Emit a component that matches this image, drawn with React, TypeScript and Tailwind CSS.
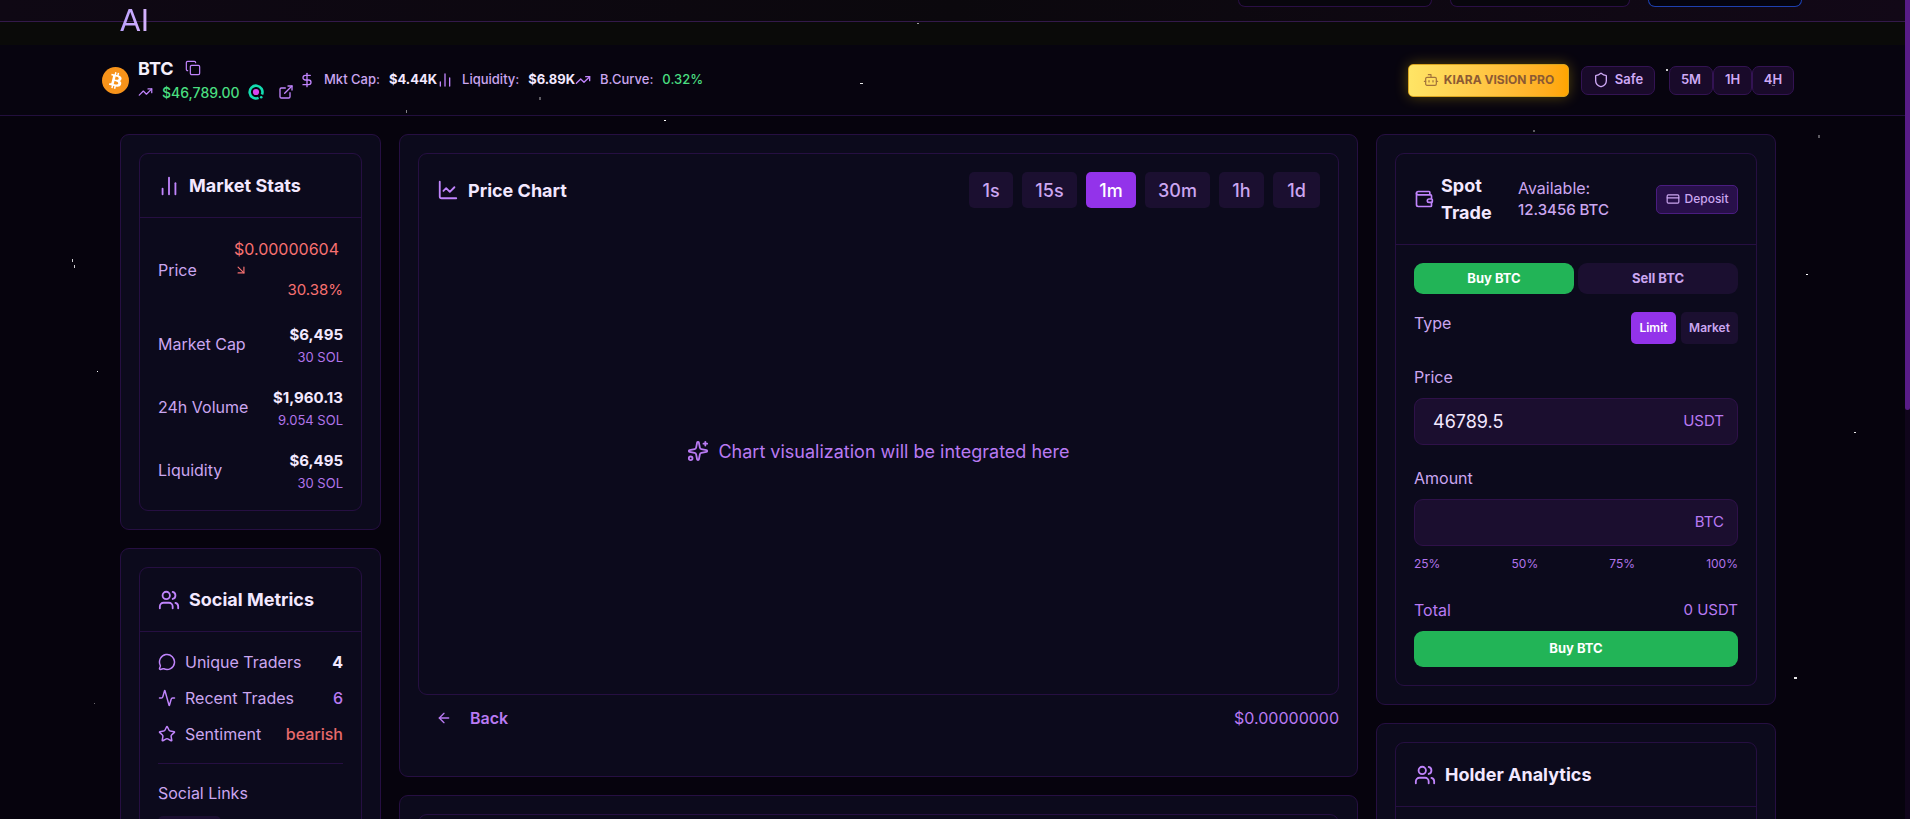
import type { ReactNode } from "react";
import {
  Activity,
  ArrowDownRight,
  ArrowLeft,
  Bot,
  ChartLine,
  ChartNoAxesColumn,
  Copy,
  CreditCard,
  DollarSign,
  ExternalLink,
  MessageCircle,
  Shield,
  Sparkles,
  Star,
  TrendingUp,
  Users,
  Wallet,
} from "lucide-react";

const stars = [
  { x: 917, y: 23, w: 2, h: 1, o: 0.6 },
  { x: 406, y: 110, w: 1, h: 3, o: 0.5 },
  { x: 539, y: 97, w: 2, h: 3, o: 0.35 },
  { x: 664, y: 120, w: 2, h: 1, o: 1 },
  { x: 860, y: 83, w: 3, h: 1, o: 0.9 },
  { x: 1666, y: 69, w: 2, h: 2, o: 0.8 },
  { x: 1772, y: 85, w: 3, h: 1, o: 0.4 },
  { x: 1533, y: 130, w: 2, h: 2, o: 0.35 },
  { x: 1818, y: 135, w: 2, h: 3, o: 0.35 },
  { x: 1806, y: 274, w: 2, h: 1, o: 1 },
  { x: 1854, y: 432, w: 2, h: 1, o: 0.9 },
  { x: 1794, y: 677, w: 3, h: 2, o: 0.9 },
  { x: 72, y: 259, w: 1, h: 3, o: 0.8 },
  { x: 74, y: 265, w: 1, h: 3, o: 0.8 },
  { x: 97, y: 371, w: 1, h: 1, o: 1 },
  { x: 94, y: 703, w: 1, h: 1, o: 0.4 },
];

function Starfield() {
  return (
    <div className="pointer-events-none absolute inset-0 z-20" aria-hidden="true">
      {stars.map((s) => (
        <span
          key={`${s.x}-${s.y}`}
          className="absolute bg-white"
          style={{ left: s.x, top: s.y, width: s.w, height: s.h, opacity: s.o }}
        />
      ))}
    </div>
  );
}

function Card({ children, className = "" }: { children?: ReactNode; className?: string }) {
  return (
    <section className="rounded-[9px] border border-[#260f42] bg-[#0c0a1c] p-[18px]">
      <div className={`rounded-[9px] border border-[#260f42] ${className}`}>{children}</div>
    </section>
  );
}

function CardHeader({ icon, title }: { icon: ReactNode; title: string }) {
  return (
    <header className="flex items-center gap-[9px] border-b border-[#260f42] p-[18px]">
      {icon}
      <h2 className="text-[18px] leading-[27px] font-bold text-[#f3e8ff]">{title}</h2>
    </header>
  );
}

function TopNav() {
  return (
    <header className="relative z-10 flex h-[22px] shrink-0 justify-between border-b border-[#33194a] bg-gradient-to-r from-[#0f0814] via-[#0b080d] to-[#120817] pr-[103px] pl-[120px]">
      <a
        href="#home"
        className="h-[42px] bg-gradient-to-r from-[#b9a0fb] to-[#d8b4fe] bg-clip-text font-['DejaVu_Sans',sans-serif] text-[30px] leading-[42px] text-transparent"
      >
        AI
      </a>
      <nav className="flex gap-[18px]" aria-label="Account">
        <button aria-label="Network" className="h-[7px] w-[194px] rounded-b-[7px] border border-t-0 border-[#2a0f45] bg-[#08060d]" />
        <button aria-label="Language" className="h-[7px] w-[180px] rounded-b-[7px] border border-t-0 border-[#2a0f45] bg-[#08060d]" />
        <button aria-label="Connect" className="h-[7px] w-[154px] rounded-b-[7px] border border-t-0 border-[#1e40af] bg-[#04030f]" />
      </nav>
    </header>
  );
}

function BitcoinLogo() {
  return (
    <svg viewBox="0 0 32 32" className="size-[27px] shrink-0" aria-label="Bitcoin">
      <circle cx="16" cy="16" r="16" fill="#f7931a" />
      <path
        fill="#fff"
        fillRule="evenodd"
        d="M23.189 14.02c.314-2.096-1.283-3.223-3.465-3.975l.708-2.84-1.728-.43-.69 2.765c-.454-.114-.92-.22-1.385-.326l.695-2.783L15.596 6l-.708 2.839c-.376-.086-.746-.17-1.104-.26l.002-.009-2.384-.595-.46 1.846s1.283.294 1.256.312c.7.175.826.638.805 1.006l-.806 3.235c.048.012.11.03.18.057l-.183-.045-1.13 4.532c-.086.212-.303.531-.793.41.018.025-1.256-.313-1.256-.313l-.858 1.978 2.25.561c.418.105.828.215 1.231.318l-.715 2.872 1.727.43.708-2.84c.472.127.93.245 1.378.357l-.706 2.828 1.728.43.715-2.866c2.948.558 5.164.333 6.097-2.333.752-2.146-.037-3.385-1.588-4.192 1.13-.26 1.98-1.003 2.207-2.538zm-3.95 5.538c-.533 2.147-4.148.986-5.32.695l.95-3.805c1.172.293 4.929.872 4.37 3.11zm.535-5.569c-.487 1.953-3.495.96-4.47.717l.86-3.45c.975.243 4.118.696 3.61 2.733z"
      />
    </svg>
  );
}

function ExchangeMark() {
  return (
    <svg viewBox="0 0 16 16" className="size-4" aria-hidden="true">
      <path d="M10.6 13.9A6.4 6.4 0 1 1 14 10.4" fill="none" stroke="#14dcb0" strokeWidth="2.6" />
      <circle cx="8" cy="8" r="3.1" fill="#d946ef" />
      <circle cx="13.2" cy="13.2" r="1.3" fill="#14dcb0" />
    </svg>
  );
}

function TokenBar() {
  return (
    <div className="mt-[23px] flex h-[71px] shrink-0 items-center justify-between border-b border-[#220f3d] bg-[#07040f] pr-[111px] pl-[102px]">
      <div className="flex items-center">
        <BitcoinLogo />
        <div className="ml-[9px] flex w-[156px] flex-col">
          <div className="flex h-6 items-center gap-[11px]">
            <h1 className="text-[18px] font-bold text-[#f5f0fb]">BTC</h1>
            <button aria-label="Copy address" className="text-[#c084fc]">
              <Copy size={16} strokeWidth={1.8} />
            </button>
          </div>
          <div className="flex h-6 items-center text-[14px] font-medium">
            <TrendingUp size={16} className="text-[#c084fc]" />
            <span className="ml-[9px] w-[77px] text-[#4ade80]">$46,789.00</span>
            <a href="#exchange" aria-label="View exchange" className="ml-[9px]">
              <ExchangeMark />
            </a>
            <a href="#explorer" aria-label="Open explorer" className="ml-[14px] text-[#c084fc]">
              <ExternalLink size={16} />
            </a>
          </div>
        </div>
        <dl className="ml-[5px] flex text-[13px] font-medium text-[#cba6f0]">
          <div className="flex items-center">
            <DollarSign size={16} className="mr-[9px] text-[#c084fc]" />
            <dt>Mkt Cap:</dt>
            <dd className="ml-[9px] font-bold text-[#f3e8ff]">$4.44K</dd>
          </div>
          <div className="flex items-center">
            <ChartNoAxesColumn size={16} className="mr-[9px] text-[#c084fc]" />
            <dt>Liquidity:</dt>
            <dd className="ml-[9px] font-bold text-[#f3e8ff]">$6.89K</dd>
          </div>
          <div className="flex items-center">
            <TrendingUp size={16} className="mr-[9px] text-[#c084fc]" />
            <dt>B.Curve:</dt>
            <dd className="ml-[9px] text-[#4ade80]">0.32%</dd>
          </div>
        </dl>
      </div>
      <div className="flex items-center text-[13px] font-semibold text-[#cfa9f6]">
        <button className="flex h-[33px] w-[161px] items-center justify-center gap-[5px] rounded-[5px] border border-[#d9a520] bg-gradient-to-r from-[#ffe566] to-[#ffa500] font-semibold text-[#8c5a33] shadow-[0_0_14px_rgba(255,215,0,0.3)]">
          <Bot size={16} strokeWidth={1.8} className="opacity-80" />
          <span className="text-[12px] font-bold">KIARA VISION PRO</span>
        </button>
        <button className="ml-3 flex h-[29px] w-[74px] items-center justify-center gap-1.5 rounded-[7px] border border-[#331353] bg-[#190a2a]">
          <Shield size={16} />
          Safe
        </button>
        <div className="ml-[14px] flex">
          <button className="h-[29px] w-11 rounded-[7px] border border-[#331353] bg-[#190a2a]">5M</button>
          <button className="h-[29px] w-[39px] rounded-[7px] border border-[#331353] bg-[#190a2a]">1H</button>
          <button className="h-[29px] w-[42px] rounded-[7px] border border-[#331353] bg-[#190a2a]">4H</button>
        </div>
      </div>
    </div>
  );
}

const marketRows = [
  { label: "Market Cap", value: "$6,495", sub: "30 SOL" },
  { label: "24h Volume", value: "$1,960.13", sub: "9.054 SOL" },
  { label: "Liquidity", value: "$6,495", sub: "30 SOL" },
];

function MarketStats() {
  return (
    <Card>
      <CardHeader icon={<ChartNoAxesColumn size={22} className="text-[#c084fc]" />} title="Market Stats" />
      <dl className="flex flex-col gap-[18px] p-[18px] text-[16px]">
        <div className="flex items-center justify-between">
          <dt className="text-[#cba6f0]">Price</dt>
          <dd className="w-[109px] text-[#f87171]">
            <div className="leading-[27px]">$0.00000604</div>
            <ArrowDownRight size={14} />
            <div className="text-right text-[15px] leading-[26px]">30.38%</div>
          </dd>
        </div>
        {marketRows.map((row) => (
          <div key={row.label} className="flex items-center justify-between">
            <dt className="text-[#cba6f0]">{row.label}</dt>
            <dd className="text-right">
              <div className="text-[15px] leading-[27px] font-bold text-[#f3e8ff]">{row.value}</div>
              <div className="text-[13px] leading-[18px] text-[#b174ea]">{row.sub}</div>
            </dd>
          </div>
        ))}
      </dl>
    </Card>
  );
}

function SocialMetrics() {
  return (
    <Card>
      <CardHeader icon={<Users size={22} className="text-[#c084fc]" />} title="Social Metrics" />
      <div className="p-[18px] text-[16px]">
        <dl className="flex flex-col gap-3">
          <div className="flex h-6 items-center gap-[9px]">
            <MessageCircle size={18} className="text-[#c084fc]" />
            <dt className="text-[#cba6f0]">Unique Traders</dt>
            <dd className="ml-auto font-bold text-[#f3e8ff]">4</dd>
          </div>
          <div className="flex h-6 items-center gap-[9px]">
            <Activity size={18} className="text-[#c084fc]" />
            <dt className="text-[#cba6f0]">Recent Trades</dt>
            <dd className="ml-auto font-medium text-[#b97af3]">6</dd>
          </div>
          <div className="flex h-6 items-center gap-[9px]">
            <Star size={18} className="text-[#c084fc]" />
            <dt className="text-[#cba6f0]">Sentiment</dt>
            <dd className="ml-auto font-medium text-[#e86a6c]">bearish</dd>
          </div>
        </dl>
        <div className="mt-[17px] border-t border-[#260f42] pt-[18px]">
          <h3 className="leading-[22px] text-[#cba6f0]">Social Links</h3>
          <button aria-label="Website" className="mt-3 h-9 w-[63px] rounded-[5px] bg-[#1b0f30]" />
        </div>
      </div>
    </Card>
  );
}

const intervals = [
  { label: "1s", width: "w-[44px]" },
  { label: "15s", width: "w-[55px]" },
  { label: "1m", width: "w-[50px]" },
  { label: "30m", width: "w-[65px]" },
  { label: "1h", width: "w-[45px]" },
  { label: "1d", width: "w-[47px]" },
];

function ChartPanel() {
  return (
    <section className="rounded-[9px] border border-[#260f42] bg-[#0c0a1c] p-[18px]">
      <div className="flex h-[542px] flex-col rounded-[9px] border border-[#260f42]">
        <div className="flex items-center justify-between px-[18px] pt-[18px]">
          <div className="flex items-center gap-[9px]">
            <ChartLine size={22} className="text-[#c084fc]" />
            <h2 className="text-[18px] leading-[27px] font-bold text-[#f3e8ff]">Price Chart</h2>
          </div>
          <div className="flex gap-[9px]">
            {intervals.map(({ label, width }) => (
              <button
                key={label}
                className={`h-9 rounded-[5px] text-[18px] font-medium ${width} ${
                  label === "1m" ? "bg-[#9333ea] text-white" : "bg-[#1b0f30] text-[#cba6f0]"
                }`}
              >
                {label}
              </button>
            ))}
          </div>
        </div>
        <div className="flex flex-1 items-center justify-center gap-[9px] text-[18px] text-[#b97af3]">
          <Sparkles size={22} />
          Chart visualization will be integrated here
        </div>
      </div>
      <div className="mb-[18px] flex h-[45px] items-center justify-between text-[16px] text-[#b97af3]">
        <button className="flex items-center gap-[18px] pl-[18px] font-semibold">
          <ArrowLeft size={16} />
          Back
        </button>
        <span>$0.00000000</span>
      </div>
    </section>
  );
}

function AmountField({ id, label, unit, value }: { id: string; label: string; unit: string; value: string }) {
  return (
    <div className="mt-[22px]">
      <label htmlFor={id} className="block leading-[22px]">
        {label}
      </label>
      <div className="mt-2.5 flex h-[47px] items-center rounded-[9px] border border-[#2f1149] bg-[#1b0e2f] pr-[13px] pl-[18px]">
        <input id={id} defaultValue={value} className="min-w-0 flex-1 bg-transparent text-[18px] text-[#f3e8ff] outline-none" />
        <span className="text-[15px] text-[#b97af3]">{unit}</span>
      </div>
    </div>
  );
}

function SpotTrade() {
  return (
    <Card>
      <header className="flex items-center border-b border-[#260f42] p-[18px]">
        <Wallet size={20} className="shrink-0 text-[#c084fc]" />
        <h2 className="ml-[7px] w-[77px] text-[18px] leading-[27px] font-bold text-[#f3e8ff]">Spot Trade</h2>
        <div className="text-[16px] leading-[22px] text-[#cba6f0]">
          <div>Available:</div>
          <div className="text-[15px] font-medium">12.3456 BTC</div>
        </div>
        <button className="ml-auto flex h-[29px] w-[82px] items-center justify-center gap-[5px] rounded-[5px] border border-[#4a1c80] bg-[#28104a] text-[12px] font-medium text-[#cba6f0]">
          <CreditCard size={14} />
          Deposit
        </button>
      </header>
      <div className="p-[18px] text-[16px] text-[#cba6f0]">
        <div className="flex gap-1 text-[13px] font-bold">
          <button className="h-[31px] flex-1 rounded-[9px] bg-[#22b457] text-white">Buy BTC</button>
          <button className="h-[31px] flex-1 rounded-[9px] bg-[#1b0f30]">Sell BTC</button>
        </div>
        <div className="mt-[18px] flex h-8 justify-between">
          <span className="leading-[22px]">Type</span>
          <div className="flex gap-[5px] text-[12px] font-semibold">
            <button className="w-[45px] rounded-[5px] bg-[#9333ea] text-white">Limit</button>
            <button className="w-[57px] rounded-[5px] bg-[#1b0f30]">Market</button>
          </div>
        </div>
        <AmountField id="price" label="Price" unit="USDT" value="46789.5" />
        <AmountField id="amount" label="Amount" unit="BTC" value="" />
        <div className="mt-[9px] flex justify-between text-[12px] leading-[18px] text-[#b174ea]">
          <button>25%</button>
          <button>50%</button>
          <button>75%</button>
          <button>100%</button>
        </div>
        <div className="mt-[26px] flex justify-between leading-[22px] text-[#b97af3]">
          <span>Total</span>
          <span className="text-[15px]">0 USDT</span>
        </div>
        <button className="mt-2.5 h-9 w-full rounded-[9px] bg-[#22b457] text-[13px] font-bold text-white">Buy BTC</button>
      </div>
    </Card>
  );
}

export default function App() {
  return (
    <div className="relative flex h-screen overflow-hidden bg-[#0a0a09] font-['Inter',sans-serif]">
      <Starfield />
      <div className="flex min-w-0 flex-1 flex-col">
        <TopNav />
        <TokenBar />
        <main className="grid flex-1 grid-cols-[261px_minmax(0,1fr)_400px] items-start gap-[18px] bg-[#06030d] pt-[18px] pr-[129px] pl-[120px]">
          <div className="flex flex-col gap-[18px]">
            <MarketStats />
            <SocialMetrics />
          </div>
          <div className="flex flex-col gap-[18px]">
            <ChartPanel />
            <Card className="h-40" />
          </div>
          <div className="flex flex-col gap-[18px]">
            <SpotTrade />
            <Card className="h-40">
              <CardHeader icon={<Users size={22} className="text-[#c084fc]" />} title="Holder Analytics" />
            </Card>
          </div>
        </main>
      </div>
      <div className="w-[5px] bg-[#10051b]" aria-hidden="true">
        <div className="h-1/2 rounded-b-full bg-[#581c87]" />
      </div>
    </div>
  );
}
